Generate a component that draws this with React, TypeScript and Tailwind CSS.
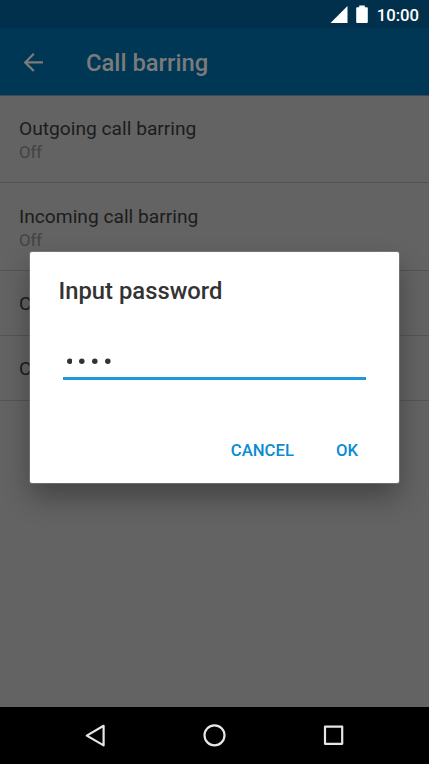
import { useState } from "react";

const settings = [
  { id: 1, title: "Outgoing call barring", value: "Off" },
  { id: 2, title: "Incoming call barring", value: "Off" },
  { id: 3, title: "C" },
  { id: 4, title: "C" },
];

const StatusBar = () => (
  <div className="h-7 shrink-0 bg-[#00304b] flex items-center justify-end pr-[10px] text-white">
    <svg width="18" height="18" viewBox="0 0 18 18" className="mr-2">
      <path d="M17.5 1v17H0.5z" fill="currentColor" />
    </svg>
    <svg width="12" height="18" viewBox="0 0 12 18" className="mr-[9px]">
      <path
        d="M3.2 0.5h5.6v1.7h2.1q.9 0 .9.9v14q0 .9-.9.9H1.1q-.9 0-.9-.9v-14q0-.9.9-.9h2.1z"
        fill="currentColor"
      />
    </svg>
    <span className="text-[16.7px] leading-7 font-medium pt-[3px]">10:00</span>
  </div>
);

const Header = () => (
  <header className="h-17 shrink-0 bg-[#003755] flex items-center text-[#7b7b7b] border-b border-[#3f4a50]">
    <button type="button" aria-label="Back" className="ml-[23px] w-5">
      <svg width="20" height="20" viewBox="0 0 20 20" fill="none">
        <path
          d="M20 10.4H2.5M10.8 1.8L2.2 10.4l8.6 8.6"
          stroke="currentColor"
          strokeWidth="2.2"
        />
      </svg>
    </button>
    <h1 className="ml-[43px] text-[23.8px] font-medium pt-[4px]">
      Call barring
    </h1>
  </header>
);

const NavBar = () => (
  <nav className="h-[57px] shrink-0 bg-black flex items-center justify-between px-[83px]">
    <svg width="24" height="24" viewBox="0 0 24 24" fill="none">
      <path
        d="M20.6 1.8v19.6L3.8 11.6z"
        stroke="#e6e6e6"
        strokeWidth="2.2"
        strokeLinejoin="round"
      />
    </svg>
    <svg width="24" height="24" viewBox="0 0 24 24" fill="none">
      <circle cx="11.5" cy="11.3" r="10" stroke="#e6e6e6" strokeWidth="2.2" />
    </svg>
    <svg width="24" height="24" viewBox="0 0 24 24" fill="none">
      <rect
        x="3"
        y="2.6"
        width="17.2"
        height="17.2"
        stroke="#e6e6e6"
        strokeWidth="2.2"
        strokeLinejoin="round"
      />
    </svg>
  </nav>
);

const PasswordDialog = () => {
  const [password] = useState("0000");

  return (
    <div
      role="dialog"
      className="absolute left-[30px] top-[252px] w-[369px] h-[231px] bg-white rounded-[2px] shadow-[0_0_0_1px_rgba(140,140,140,0.5),0_14px_28px_rgba(0,0,0,0.32)] flex flex-col"
    >
      <h2 className="pl-[28.5px] pt-[23px] text-[23.8px] leading-8 font-medium text-[#333333]">
        Input password
      </h2>
      <div className="mt-[40px] mx-[33px] h-[33px] pl-[3.7px] pt-[11px] border-b-3 border-[#1f98da] flex gap-[7.2px]">
        {password.split("").map((_, i) => (
          <svg key={i} width="5.6" height="6" viewBox="0 0 5.6 6">
            <circle cx="2.8" cy="3.2" r="2.75" fill="#333333" />
          </svg>
        ))}
      </div>
      <div className="mt-[57px] pr-[41px] flex justify-end gap-[41px] text-[16.7px] leading-7 font-medium text-[#0a8bd3]">
        <button type="button" className="-ml-px mr-px">CANCEL</button>
        <button type="button">OK</button>
      </div>
    </div>
  );
};

const App = () => {
  return (
    <div className="relative w-[429px] h-[764px] overflow-hidden bg-[#636363] flex flex-col font-[Roboto,sans-serif]">
      <StatusBar />
      <Header />
      <main className="flex-1">
        {settings.map((item) => (
          <div
            key={item.id}
            className={
              item.value
                ? "h-[87px] pt-5 pl-[19px] border-b border-[#545454] first:mb-[1px]"
                : "h-[65px] pt-5 pl-[19px] border-b border-[#545454]"
            }
          >
            <p className="text-[19.2px] leading-[26px] text-[#1c1c1c]">
              {item.title}
            </p>
            {item.value && (
              <p className="text-[16.7px] leading-[22px] text-[#424242]">
                {item.value}
              </p>
            )}
          </div>
        ))}
      </main>
      <NavBar />
      <PasswordDialog />
    </div>
  );
};

export default App;
